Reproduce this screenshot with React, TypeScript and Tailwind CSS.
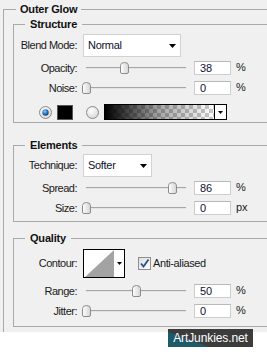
import React from "react";

const font = { fontFamily: '"Liberation Sans", Arial, sans-serif' };

function Thumb({ value }: { value: number }) {
  return (
    <svg
      width="9"
      height="12"
      viewBox="0 0 9 12"
      className="absolute top-[1px]"
      style={{ left: value - 4.5 }}
    >
      <defs>
        <linearGradient id="tg" x1="0" y1="0" x2="1" y2="0">
          <stop offset="0" stopColor="#ffffff" />
          <stop offset="1" stopColor="#d4d4d4" />
        </linearGradient>
      </defs>
      <path
        d="M0.5 3.5 Q0.5 0.5 4.5 0.5 Q8.5 0.5 8.5 3.5 V10 Q8.5 11.5 7 11.5 H2 Q0.5 11.5 0.5 10 Z"
        fill="url(#tg)"
        stroke="#8c8c8c"
      />
    </svg>
  );
}

function SliderRow({
  label,
  value,
  unit,
  mt,
}: {
  label: string;
  value: number;
  unit: string;
  mt: string;
}) {
  return (
    <div className={`flex items-center h-[14px] ${mt}`}>
      <div className="w-[63px] text-right text-[11px] tracking-[-0.5px] leading-[14px] text-[#1a1a1a]">
        {label}
      </div>
      <div className="relative ml-[9px] w-[100px] h-[14px]">
        <div className="absolute left-0 right-0 top-[6px] h-[1px] bg-[#a6a6a6]" />
        <div className="absolute left-0 right-0 top-[7px] h-[1px] bg-[#e4e4e4]" />
        <Thumb value={value} />
      </div>
      <div className="ml-[8px] w-[37px] h-[14px] bg-white border border-[#cdcdcd] border-t-[#b9b9b9] text-[11px] leading-[12px] pl-[5px] text-[#101030]">
        {value}
      </div>
      <div className="ml-[5px] text-[11px] leading-[14px] text-[#1a1a1a] -mt-[3px]">
        {unit}
      </div>
    </div>
  );
}

function Arrow() {
  return (
    <svg width="7" height="4" viewBox="0 0 7 4">
      <path d="M0 0 H7 L3.5 4 Z" fill="#000" />
    </svg>
  );
}

function Dropdown({ text, w }: { text: string; w: string }) {
  return (
    <div
      className={`${w} h-[23px] ml-[6px] bg-white border border-[#d2d2d2] flex items-center pl-[4px] pr-[4px] justify-between`}
    >
      <span className="text-[11px] tracking-[-0.3px] text-[#10102a]">{text}</span>
      <Arrow />
    </div>
  );
}

function Radio({ checked }: { checked: boolean }) {
  return (
    <svg width="13" height="13" viewBox="0 0 13 13">
      <defs>
        <radialGradient id={checked ? "rg1" : "rg0"} cx="0.4" cy="0.35" r="0.7">
          <stop offset="0" stopColor="#ffffff" />
          <stop offset="1" stopColor="#d6d6d6" />
        </radialGradient>
        <radialGradient id="dot" cx="0.4" cy="0.35" r="0.7">
          <stop offset="0" stopColor="#8fd0ff" />
          <stop offset="0.5" stopColor="#2a7ac0" />
          <stop offset="1" stopColor="#0d3f73" />
        </radialGradient>
      </defs>
      <circle cx="6.5" cy="6.5" r="6" fill={`url(#${checked ? "rg1" : "rg0"})`} stroke="#8a8a8a" />
      {checked && <circle cx="6.5" cy="6.5" r="3.2" fill="url(#dot)" />}
    </svg>
  );
}

function Legend({ children, ml, px }: { children: React.ReactNode; ml: string; px: string }) {
  return (
    <legend
      className={`${ml} ${px} h-[13px] leading-[13px] text-[11px] font-bold tracking-[-0.2px] text-[#111]`}
    >
      {children}
    </legend>
  );
}

export default function App() {
  return (
    <div className="relative w-[267px] h-[360px] bg-white overflow-hidden" style={font}>
      <div className="h-[332px] bg-[#f0f0f0] overflow-hidden pt-[3px] pl-[3px]">
        <fieldset className="border border-[#a9a9a9] w-[300px] h-[400px]">
          <Legend ml="ml-[12px]" px="px-[4px]">
            Outer Glow
          </Legend>

          {/* Structure */}
          <fieldset className="ml-[9px] mt-[2px] w-[300px] border border-[#a9a9a9] pb-[2px]">
            <Legend ml="ml-[11px]" px="px-[5px]">
              Structure
            </Legend>
            <div className="flex items-center h-[23px] mt-[3px]">
              <div className="w-[63px] text-right text-[11px] tracking-[-0.5px] text-[#1a1a1a]">
                Blend Mode:
              </div>
              <Dropdown text="Normal" w="w-[98px]" />
            </div>
            <SliderRow label="Opacity:" value={38} unit="%" mt="mt-[4px]" />
            <SliderRow label="Noise:" value={0} unit="%" mt="mt-[6px]" />
            <div className="flex items-center h-[16px] mt-[9px]">
              <div className="ml-[25px] flex">
                <Radio checked />
              </div>
              <div className="ml-[5px] w-[16px] h-[15px] bg-black border border-[#555]" />
              <div className="ml-[13px] flex">
                <Radio checked={false} />
              </div>
              <div className="ml-[5px] w-[123px] h-[16px] border border-black flex">
                <div className="flex-1 bg-[repeating-conic-gradient(#c8c8c8_0%_25%,#ffffff_0%_50%)] bg-[length:8px_8px]">
                  <div className="w-full h-full bg-linear-to-r from-black via-[rgba(0,0,0,0.35)] to-transparent" />
                </div>
                <div className="w-[12px] border-l border-black bg-white flex items-center justify-center">
                  <svg width="5" height="3" viewBox="0 0 5 3">
                    <path d="M0 0 H5 L2.5 3 Z" fill="#000" />
                  </svg>
                </div>
              </div>
            </div>
          </fieldset>

          {/* Elements */}
          <fieldset className="ml-[9px] mt-[16px] w-[300px] border border-[#a9a9a9] pb-[6px]">
            <Legend ml="ml-[11px]" px="px-[5px]">
              Elements
            </Legend>
            <div className="flex items-center h-[23px] mt-[2px]">
              <div className="w-[63px] text-right text-[11px] tracking-[-0.5px] text-[#1a1a1a]">
                Technique:
              </div>
              <Dropdown text="Softer" w="w-[69px]" />
            </div>
            <SliderRow label="Spread:" value={86} unit="%" mt="mt-[4px]" />
            <SliderRow label="Size:" value={0} unit="px" mt="mt-[6px]" />
          </fieldset>

          {/* Quality */}
          <fieldset className="ml-[9px] mt-[10px] w-[300px] border border-[#a9a9a9] pb-[8px]">
            <Legend ml="ml-[11px]" px="px-[5px]">
              Quality
            </Legend>
            <div className="flex items-center h-[29px] mt-[4px]">
              <div className="w-[63px] text-right text-[11px] tracking-[-0.5px] text-[#1a1a1a]">
                Contour:
              </div>
              <div className="ml-[6px] w-[42px] h-[29px] border border-black bg-white flex">
                <svg width="30" height="27" viewBox="0 0 30 27" className="block">
                  <polygon points="1,27 30,0 30,27" fill="#a3a3a3" />
                </svg>
                <div className="flex-1 flex items-center justify-center">
                  <svg width="5" height="3" viewBox="0 0 5 3">
                    <path d="M0 0 H5 L2.5 3 Z" fill="#000" />
                  </svg>
                </div>
              </div>
              <div className="ml-[13px] flex">
                <svg width="13" height="13" viewBox="0 0 13 13">
                  <defs>
                    <linearGradient id="cb" x1="0" y1="0" x2="1" y2="1">
                      <stop offset="0" stopColor="#dcdcdc" />
                      <stop offset="1" stopColor="#ffffff" />
                    </linearGradient>
                  </defs>
                  <rect x="0.5" y="0.5" width="12" height="12" fill="url(#cb)" stroke="#8e8f8f" />
                  <path d="M3 6.5 L5.5 9.5 L10.5 2.5" fill="none" stroke="#2c4f8c" strokeWidth="1.8" />
                </svg>
              </div>
              <span className="ml-[2px] text-[11px] tracking-[-0.4px] text-[#1a1a1a]">
                Anti-aliased
              </span>
            </div>
            <SliderRow label="Range:" value={50} unit="%" mt="mt-[6px]" />
            <SliderRow label="Jitter:" value={0} unit="%" mt="mt-[6px]" />
          </fieldset>
        </fieldset>
      </div>

      <div className="absolute left-[168px] top-[329px] w-[85px] h-[18px] bg-[linear-gradient(20deg,#1e5a6a_30%,#3c3c3c_31%)] flex items-center justify-center">
        <span className="text-[12px] leading-[18px] text-white tracking-[-0.1px]">ArtJunkies.net</span>
      </div>
    </div>
  );
}
